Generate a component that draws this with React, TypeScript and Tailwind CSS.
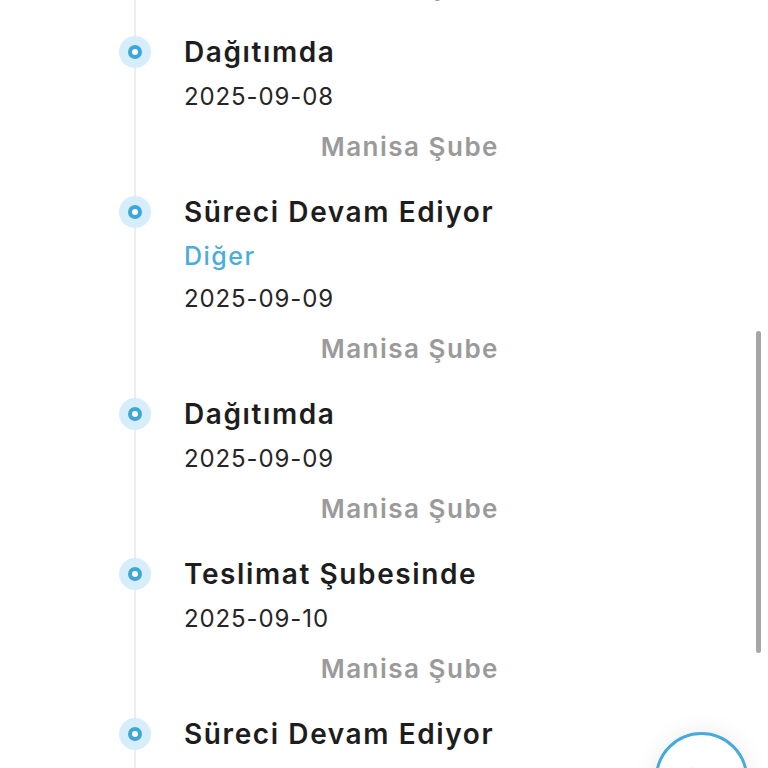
import React from "react";

type Item = { title: string; sub?: string; date: string; branch: string };

const items: Item[] = [
  { title: "Süreci Devam Ediyor", date: "2025-09-08", branch: "Manisa Şube" },
  { title: "Dağıtımda", date: "2025-09-08", branch: "Manisa Şube" },
  { title: "Süreci Devam Ediyor", sub: "Diğer", date: "2025-09-09", branch: "Manisa Şube" },
  { title: "Dağıtımda", date: "2025-09-09", branch: "Manisa Şube" },
  { title: "Teslimat Şubesinde", date: "2025-09-10", branch: "Manisa Şube" },
  { title: "Süreci Devam Ediyor", date: "2025-09-10", branch: "Manisa Şube" },
];

function Dot() {
  return (
    <div className="w-[32px] h-[32px] rounded-full bg-[#d6eef9] flex items-center justify-center">
      <div className="w-[14px] h-[14px] rounded-full border-[4px] border-[#3ea6d8] bg-white" />
    </div>
  );
}

export default function App() {
  return (
    <div
      className="relative w-[768px] h-[768px] overflow-hidden bg-white"
      style={{ fontFamily: "Inter, 'Noto Sans', sans-serif" }}
    >
      <div className="absolute left-[134px] top-0 w-[2px] h-full bg-[#eeeeee]" />
      <div className="mt-[-131px] pl-[119px] flex flex-col gap-[14px]">
        {items.map((it, i) => (
          <div key={i} className="flex">
            <div className="w-[32px] h-[46px] flex items-center relative z-10">
              <Dot />
            </div>
            <div className="ml-[33px] w-[313px] flex flex-col">
              <div className="leading-[46px] text-[28px] font-semibold text-[#1d1d1d] tracking-[1.6px] whitespace-nowrap">
                {it.title}
              </div>
              {it.sub && (
                <div className="leading-[42px] text-[25px] font-medium text-[#4aaddb] tracking-[1.5px]">
                  {it.sub}
                </div>
              )}
              <div className="leading-[44px] text-[24px] font-normal text-[#262626] tracking-[0.9px]">
                {it.date}
              </div>
              <div className="leading-[56px] text-[26px] font-semibold text-[#9a9a9a] tracking-[1.5px] text-right whitespace-nowrap -mr-[2px]">
                {it.branch}
              </div>
            </div>
          </div>
        ))}
      </div>
      <div className="absolute left-[756px] top-[331px] w-[5px] h-[322px] rounded-full bg-[#a6a6a6]" />
      <div className="absolute left-[655px] top-[732px] w-[93px] h-[93px] rounded-full border-[3px] border-[#47aad9] bg-white shadow-[0_0_24px_rgba(0,0,0,0.08)] flex items-start justify-center">
        <svg width="24" height="24" viewBox="0 0 24 24" className="mt-[30px] mr-[20px]">
          <path d="M12 4 L12 20 M6 10 L12 4 L18 10" stroke="#8a8a8a" strokeWidth="2" fill="none" strokeLinecap="round" />
        </svg>
      </div>
    </div>
  );
}
